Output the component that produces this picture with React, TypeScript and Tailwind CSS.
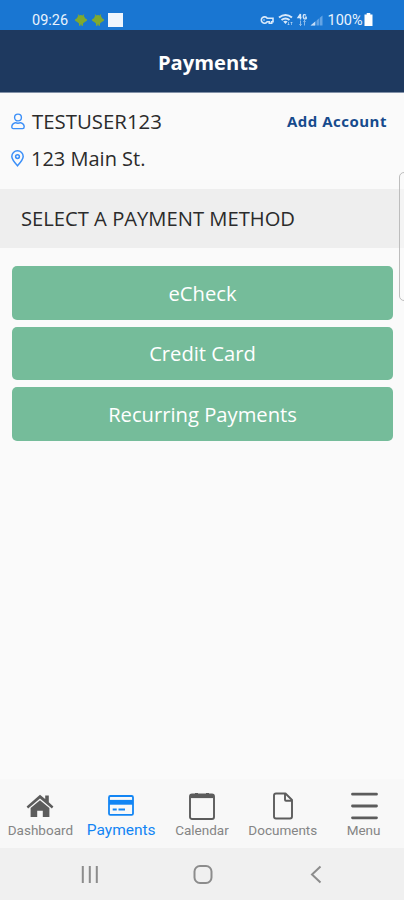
import type { ReactNode } from "react";
import clsx from "clsx";

const METHODS = ["eCheck", "Credit Card", "Recurring Payments"];

const TABS: { label: string; icon: ReactNode; active?: boolean }[] = [
  { label: "Dashboard", icon: <HomeIcon /> },
  { label: "Payments", icon: <CardIcon />, active: true },
  { label: "Calendar", icon: <CalendarIcon /> },
  { label: "Documents", icon: <DocumentIcon /> },
  { label: "Menu", icon: <MenuIcon /> },
];

function AndroidIcon() {
  return (
    <svg width="12" height="12" viewBox="0 0 12 12" fill="#80a92f">
      <path d="M3.2.2 4.300 1.400Q6 .8 7.700 1.400L8.800.2l.5.4-.6 1.500Q9.800 3 10 4.200L11.900 5.200v1.600L9.800 8 8 9.600V11.800H6.500V10.500H5.500v1.300H4V9.600L2.200 8 .1 6.800V5.200l1.900-1q.2-1.200 1.300-2.100L2.700.6z" />
    </svg>
  );
}

function StatusIcons() {
  return (
    <svg width="65" height="16" viewBox="0 0 65 16" fill="none" stroke="#d9e9fa">
      {/* vpn key */}
      <path d="M8.2 6.3H14v3.5h-1.3v1.5h-2.4V9.8H8.2A3.2 3.2 0 1 1 8.2 6.3Z" strokeWidth="1.6" />
      <circle cx="5" cy="8" r=".8" fill="#d9e9fa" stroke="none" />
      {/* wifi */}
      <path d="M20 5.500q6.500-5 13 0M22.500 8q4-3 8 0" strokeWidth="2" />
      <path d="M24.200 9.500q2.200-1.600 4.400 0L26.500 12z" fill="#d9e9fa" stroke="none" />
      <path d="M29.500 10v3m-1-1 1 1 1-1M32.500 13v-3m-1 1 1-1 1 1" strokeWidth=".8" opacity=".7" />
      {/* 4g data */}
      <path d="M41.500 2 39 5.500h3.500M41.500 2v5.500M47 3.200q-2.600-1.700-2.800 1.400.1 3.200 3 2V5.200h-1.500" strokeWidth="1.300" />
      <path d="M41.500 8.500v5m-1.200-1.200 1.200 1.200 1.200-1.200M45.500 13.500v-5m-1.200 1.200 1.200-1.200 1.200 1.200" strokeWidth="1" opacity=".6" />
      {/* signal */}
      <path d="M51.500 13.500 63.500 3.500v10z" fill="#64a4e4" stroke="none" />
      <path d="M51.500 13.500 56 9.700v3.800z" fill="#c4dcf6" stroke="none" />
      <path d="M57.200 8v6M60.400 5.500v8.500" stroke="#1976d2" strokeWidth=".7" />
    </svg>
  );
}

function UserIcon() {
  return (
    <svg width="14" height="17" viewBox="0 0 14 17" fill="none" stroke="#3b8ff8" strokeWidth="1.400">
      <circle cx="7" cy="4.500" r="3.400" />
      <path d="M4.300 9.700Q7 10.700 9.700 9.700q3.400.8 3.500 4.100 0 1.800-1.500 1.800H2.300Q.8 15.600.8 13.800.9 10.500 4.300 9.700Z" />
    </svg>
  );
}

function PinIcon() {
  return (
    <svg width="13" height="17" viewBox="0 0 13 17" fill="none" stroke="#3b8ff8" strokeWidth="1.500">
      <path d="M6.500 15.800Q.8 9.500.8 6.500a5.700 5.700 0 0 1 11.400 0q0 3-5.700 9.300Z" />
      <circle cx="6.500" cy="6.600" r="1.900" />
    </svg>
  );
}

function HomeIcon() {
  return (
    <svg width="28" height="24" viewBox="0 0 28 24" fill="#5c5c5c">
      <path d="M14 .8 19.200 5.100V1.600h3.600v6.700l4.600 4.300-1.500 1.800L14 4.500 2.100 14.400.6 12.600z" />
      <path d="M14 6.300 23.400 14V23h-6.600v-6.300h-5.600V23H4.600v-9z" />
    </svg>
  );
}

function CardIcon() {
  return (
    <svg width="26" height="22" viewBox="0 0 26 22" fill="none" stroke="#1285f4">
      <rect x="1" y="1" width="24" height="18.800" rx="1.400" strokeWidth="1.800" />
      <path d="M1 7.300h24" strokeWidth="4.800" />
      <path d="M4.700 14.500h4M10.500 14.500h6.500" strokeWidth="1.900" />
    </svg>
  );
}

function CalendarIcon() {
  return (
    <svg width="26" height="28" viewBox="0 0 26 28" fill="none" stroke="#5c5c5c">
      <rect x="1" y="2.500" width="24" height="24.500" rx="2" strokeWidth="1.900" />
      <path d="M1.500 4.200h23" strokeWidth="3.800" />
      <path d="M7.500.9v3M18.500.9v3" strokeWidth="3" />
    </svg>
  );
}

function DocumentIcon() {
  return (
    <svg width="20" height="28" viewBox="0 0 20 28" fill="none" stroke="#5c5c5c" strokeWidth="1.900" strokeLinejoin="round">
      <path d="M3 1.500h9.500L19 8v16.500q0 2-2 2H3q-2 0-2-2v-21q0-2 2-2Z" />
      <path d="M12 2v5.700q0 1 1 1h5.700" />
    </svg>
  );
}

function MenuIcon() {
  return (
    <svg width="28" height="28" viewBox="0 0 28 28" stroke="#5c5c5c" strokeWidth="2.800" strokeLinecap="round">
      <path d="M2.500 2.200h24M2.500 14h24M2.500 25.800h24" />
    </svg>
  );
}

function StatusBar() {
  return (
    <div className="flex h-[30px] items-center bg-[#1976d2] pt-[9px] pl-8 font-[Roboto] text-[14.500px] leading-5 text-[#eaf3fd]">
      <span className="w-[43px] pt-[2px]">09:26</span>
      <span className="flex gap-[5px]">
        <AndroidIcon />
        <AndroidIcon />
      </span>
      <span className="ml-[3.500px] h-[14px] w-[15px] bg-[#eef5fd]" />
      <span className="ml-[136px]">
        <StatusIcons />
      </span>
      <span className="ml-[4px] w-[36px] pt-[2px]">100%</span>
      <svg width="9" height="13" viewBox="0 0 9 13" fill="#fff">
        <path d="M2.700 0h3.600v1.500H8.500V13H.5V1.500h2.200z" />
      </svg>
    </div>
  );
}

export default function App() {
  return (
    <div className="relative flex h-[900px] w-[404px] flex-col overflow-hidden bg-[#fafafa] font-['Open_Sans',sans-serif]">
      <StatusBar />
      <header className="flex h-[63px] items-center justify-center border-b border-[#8291a8] bg-[#1e395f] pt-[3px] pl-3">
        <h1 className="text-[20.200px] font-bold text-white">Payments</h1>
      </header>

      {/* Account */}
      <section className="h-24 px-[11px] pt-[10px] text-[20px] text-[#2b2b2b]">
        <div className="flex h-[37px] items-center">
          <UserIcon />
          <span className="ml-[7px] text-[20.400px]">TESTUSER123</span>
          <a className="mr-[6px] ml-auto text-[15px] font-bold tracking-[0.5px] text-[#164a8c]">Add Account</a>
        </div>
        <div className="flex h-[37px] items-center">
          <PinIcon />
          <span className="ml-[7px]">123 Main St.</span>
        </div>
      </section>

      <h2 className="flex h-[59px] items-center bg-[#eee] pl-[21px] text-[20.200px] text-[#2b2b2b]">
        SELECT A PAYMENT METHOD
      </h2>

      <main className="flex flex-1 flex-col gap-[7px] pt-[18px] pr-[11px] pl-3">
        {METHODS.map((method) => (
          <button key={method} className="h-[53.500px] rounded-[5px] bg-[#75bc9a] text-[20.200px] text-white">
            {method}
          </button>
        ))}
      </main>

      {/* Edge panel handle */}
      <div className="absolute top-[172px] left-[399px] h-[129px] w-4 rounded-[5px] border border-[#bdbdbd] bg-[#fafafa]/50" />

      {/* Tabs */}
      <nav className="grid h-[69px] grid-cols-5 bg-[#f8f8f8] pt-3 font-[Roboto]">
        {TABS.map((tab) => (
          <div key={tab.label} className="flex flex-col items-center">
            <div className="flex h-[29px] items-center">{tab.icon}</div>
            <span
              className={clsx(
                "leading-[20px] whitespace-nowrap",
                tab.active ? "text-[15.500px] text-[#1285f4]" : "text-[13.500px] text-[#858585]"
              )}
            >
              {tab.label}
            </span>
          </div>
        ))}
      </nav>

      {/* Android navigation */}
      <div className="h-[52px] bg-[#f0f0f0] pl-20">
        <svg width="244" height="52" viewBox="0 0 244 52" fill="none" stroke="#8c8c8c" strokeWidth="2">
          <path d="M2.800 18v17M9.800 18v17M16.800 18v17" />
          <rect x="114.500" y="18" width="17" height="17" rx="5.500" />
          <path d="M240.500 18.500 232 26.500l8.500 8" />
        </svg>
      </div>
    </div>
  );
}
